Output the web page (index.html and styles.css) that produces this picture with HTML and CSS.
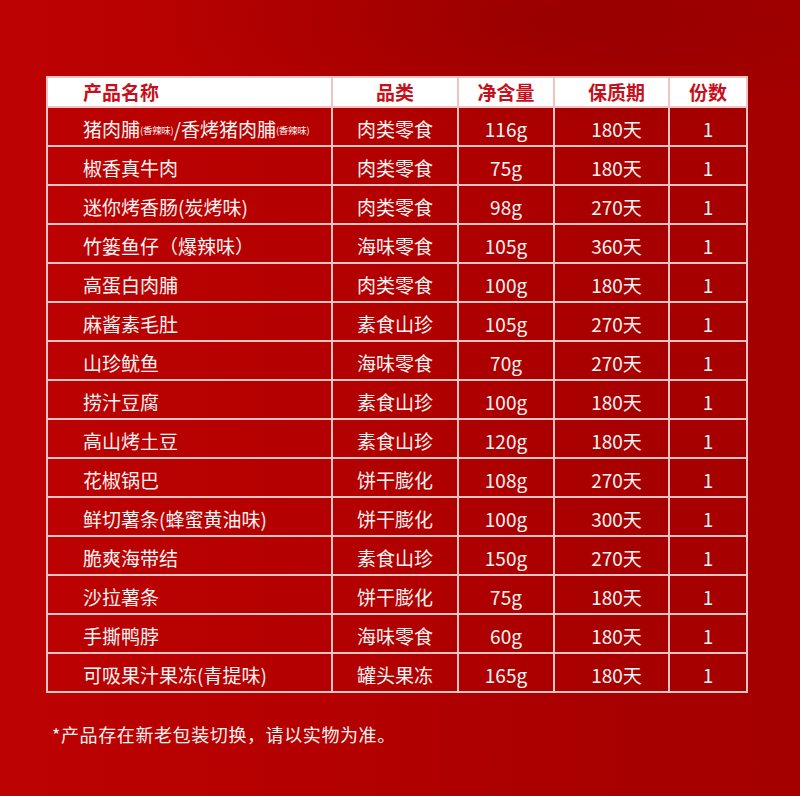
FILE: index.html
```html
<!DOCTYPE html>
<html lang="zh-CN">
<head>
<meta charset="utf-8">
<title>产品清单</title>
<link rel="stylesheet" href="styles.css">
</head>
<body>
<main class="page">
  <div class="sheet">
    <div class="cell head name">产品名称</div>
    <div class="cell head">品类</div>
    <div class="cell head">净含量</div>
    <div class="cell head c4">保质期</div>
    <div class="cell head">份数</div>

    <div class="cell name">猪肉脯<small>(香辣味)</small>/香烤猪肉脯<small>(香辣味)</small></div>
    <div class="cell">肉类零食</div><div class="cell">116g</div><div class="cell c4">180天</div><div class="cell">1</div>

    <div class="cell name">椒香真牛肉</div>
    <div class="cell">肉类零食</div><div class="cell">75g</div><div class="cell c4">180天</div><div class="cell">1</div>

    <div class="cell name">迷你烤香肠(炭烤味)</div>
    <div class="cell">肉类零食</div><div class="cell">98g</div><div class="cell c4">270天</div><div class="cell">1</div>

    <div class="cell name">竹篓鱼仔（爆辣味）</div>
    <div class="cell">海味零食</div><div class="cell">105g</div><div class="cell c4">360天</div><div class="cell">1</div>

    <div class="cell name">高蛋白肉脯</div>
    <div class="cell">肉类零食</div><div class="cell">100g</div><div class="cell c4">180天</div><div class="cell">1</div>

    <div class="cell name">麻酱素毛肚</div>
    <div class="cell">素食山珍</div><div class="cell">105g</div><div class="cell c4">270天</div><div class="cell">1</div>

    <div class="cell name">山珍鱿鱼</div>
    <div class="cell">海味零食</div><div class="cell">70g</div><div class="cell c4">270天</div><div class="cell">1</div>

    <div class="cell name">捞汁豆腐</div>
    <div class="cell">素食山珍</div><div class="cell">100g</div><div class="cell c4">180天</div><div class="cell">1</div>

    <div class="cell name">高山烤土豆</div>
    <div class="cell">素食山珍</div><div class="cell">120g</div><div class="cell c4">180天</div><div class="cell">1</div>

    <div class="cell name">花椒锅巴</div>
    <div class="cell">饼干膨化</div><div class="cell">108g</div><div class="cell c4">270天</div><div class="cell">1</div>

    <div class="cell name">鲜切薯条(蜂蜜黄油味)</div>
    <div class="cell">饼干膨化</div><div class="cell">100g</div><div class="cell c4">300天</div><div class="cell">1</div>

    <div class="cell name">脆爽海带结</div>
    <div class="cell">素食山珍</div><div class="cell">150g</div><div class="cell c4">270天</div><div class="cell">1</div>

    <div class="cell name">沙拉薯条</div>
    <div class="cell">饼干膨化</div><div class="cell">75g</div><div class="cell c4">180天</div><div class="cell">1</div>

    <div class="cell name">手撕鸭脖</div>
    <div class="cell">海味零食</div><div class="cell">60g</div><div class="cell c4">180天</div><div class="cell">1</div>

    <div class="cell name">可吸果汁果冻(青提味)</div>
    <div class="cell">罐头果冻</div><div class="cell">165g</div><div class="cell c4">180天</div><div class="cell">1</div>
  </div>
  <p class="note">*产品存在新老包装切换，请以实物为准。</p>
</main>
</body>
</html>
```
FILE: styles.css
```css
html, body {
  margin: 0;
  padding: 0;
}

body {
  width: 800px;
  height: 796px;
  overflow: hidden;
  font-family: "Noto Sans CJK SC", "Noto Sans", sans-serif;
  color: #fff3f3;
  background:
    radial-gradient(ellipse 420px 110px at 560px 20px, rgba(120, 0, 0, 0.35), rgba(120, 0, 0, 0) 100%),
    linear-gradient(90deg, #bd0202 0%, #b30000 45%, #a70000 80%, #a50000 100%);
}

.page {
  padding: 76px 0 0 46px;
}

.sheet {
  display: grid;
  grid-template-columns: 285px 126px 96px 115px 78px;
  grid-template-rows: 30px;
  grid-auto-rows: 39px;
  width: max-content;
  border-top: 2px solid #f1c4c4;
  border-left: 2px solid #f1c4c4;
}

.cell {
  box-sizing: border-box;
  display: flex;
  align-items: center;
  justify-content: center;
  border-right: 2px solid #f1c4c4;
  border-bottom: 2px solid #f1c4c4;
  padding-top: 3px;
  font-size: 19px;
  line-height: 1;
  white-space: nowrap;
}

.cell.head {
  background: #ffffff;
  color: #c8101c;
  font-weight: 700;
  padding-top: 0;
  padding-bottom: 2px;
}

.cell.name {
  justify-content: flex-start;
  padding-left: 35px;
}

.cell.c4 {
  padding-left: 10px;
}

.cell small {
  font-size: 9.5px;
  letter-spacing: -0.3px;
  margin-top: 5px;
}

.note {
  margin: 29px 0 0 6px;
  font-size: 18px;
  line-height: 24px;
  letter-spacing: 0.6px;
  color: #fff0f0;
}
```
